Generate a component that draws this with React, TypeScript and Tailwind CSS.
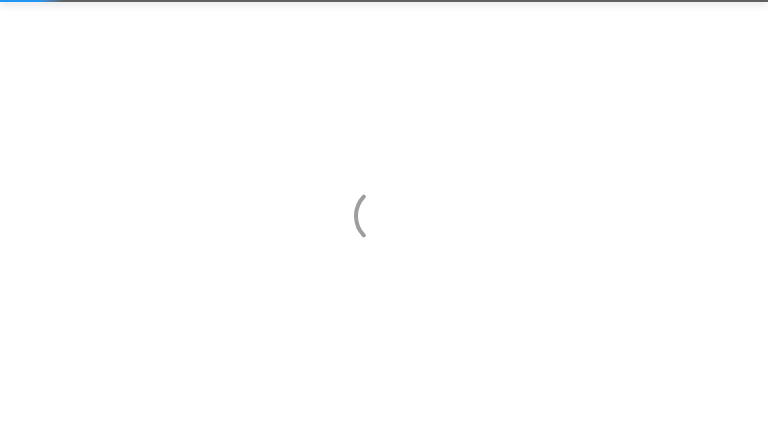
import React from "react";

const Spinner = () => (
  <svg width="60" height="60" viewBox="0 0 60 60" fill="none" className="block">
    <path
      d="M9.8 10.6 A28 28 0 0 0 9.8 49.4"
      stroke="#9e9e9e"
      strokeWidth="4"
      strokeLinecap="round"
    />
  </svg>
);

export default function App() {
  return (
    <div className="flex h-[432px] w-full flex-col overflow-hidden bg-white">
      <div className="relative h-[2px] w-full shrink-0 bg-[#5f5f5f] shadow-[0_1px_8px_rgba(0,0,0,0.35)]">
        <div className="h-full w-[64px] bg-gradient-to-r from-[#2196f3] from-60% to-[#5f5f5f]" />
      </div>
      <div className="flex flex-1 items-center justify-center pb-[2px]">
        <Spinner />
      </div>
    </div>
  );
}
